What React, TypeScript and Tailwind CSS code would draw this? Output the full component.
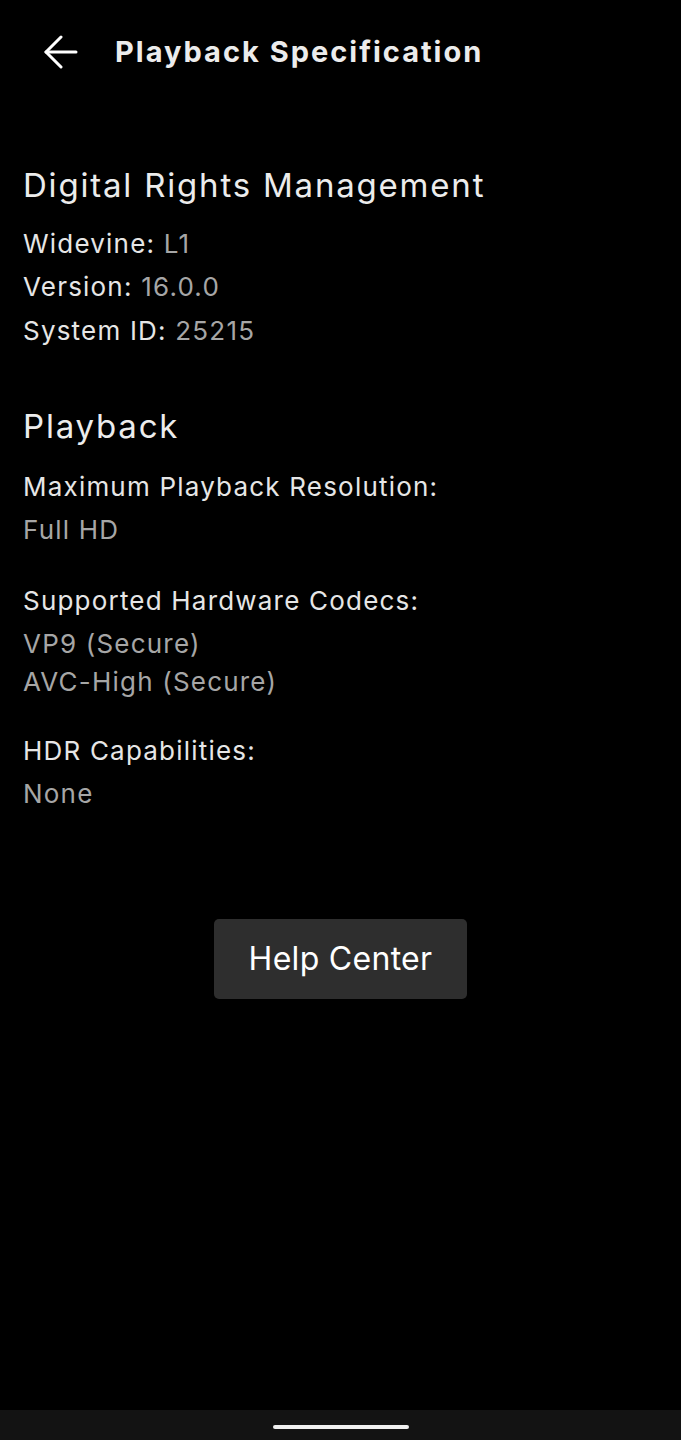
const font = { fontFamily: 'Inter, "Noto Sans", "Liberation Sans", sans-serif' }

function BackArrow() {
  return (
    <svg width="34" height="34" viewBox="0 0 34 34" fill="none" stroke="#ffffff" strokeWidth="3" strokeLinecap="round" strokeLinejoin="round">
      <path d="M2 17 H32" />
      <path d="M17 2 L2 17 L17 32" />
    </svg>
  )
}

function Row({ label, value }: { label: string; value: string }) {
  return (
    <div className="h-[43.5px] flex items-center text-[26px] tracking-[1.2px]">
      <span className="text-[#e6e6e6]">{label}&nbsp;</span>
      <span className="text-[#a6a6a6]">{value}</span>
    </div>
  )
}

export default function App() {
  return (
    <div className="w-[681px] h-[1440px] bg-black flex flex-col text-white" style={font}>
      {/* top bar */}
      <header className="h-[104px] flex items-center pl-[44px]">
        <BackArrow />
        <h1 className="ml-[37px] text-[29px] font-bold text-[#ececec] tracking-[2px]">Playback Specification</h1>
      </header>

      <main className="flex-1 px-[23px]">
        <section className="mt-[60px]">
          <h2 className="h-[44px] flex items-center text-[33px] text-[#ececec] tracking-[1.8px]">Digital Rights Management</h2>
          <div className="mt-[13.5px]">
            <Row label="Widevine:" value="L1" />
            <Row label="Version:" value="16.0.0" />
            <Row label="System ID:" value="25215" />
          </div>
        </section>

        <section className="mt-[53px]">
          <h2 className="h-[44px] flex items-center text-[33px] text-[#ececec] tracking-[1.8px]">Playback</h2>

          <div className="text-[26px] tracking-[1.2px]">
            <div className="mt-[16px] h-[43px] flex items-center text-[#e6e6e6]">Maximum Playback Resolution:</div>
            <div className="h-[43px] flex items-center text-[#a6a6a6]">Full HD</div>

            <div className="mt-[28px] h-[43px] flex items-center text-[#e6e6e6]">Supported Hardware Codecs:</div>
            <div className="h-[43px] flex items-center text-[#a6a6a6]">VP9 (Secure)</div>
            <div className="h-[33px] flex items-center text-[#a6a6a6]">AVC-High (Secure)</div>

            <div className="mt-[31px] h-[43px] flex items-center text-[#e6e6e6]">HDR Capabilities:</div>
            <div className="h-[43px] flex items-center text-[#a6a6a6]">None</div>
          </div>
        </section>

        <div className="flex justify-center mt-[104px]">
          <button className="w-[253px] h-[80px] bg-[#2e2e2e] rounded-[5px] text-[32px] tracking-[0.3px] text-white">Help Center</button>
        </div>
      </main>

      {/* android nav bar */}
      <div className="h-[30px] bg-[#131313] flex justify-center pt-[15px]">
        <div className="w-[136px] h-[4px] rounded-full bg-[#f0f0f0]" />
      </div>
    </div>
  )
}
